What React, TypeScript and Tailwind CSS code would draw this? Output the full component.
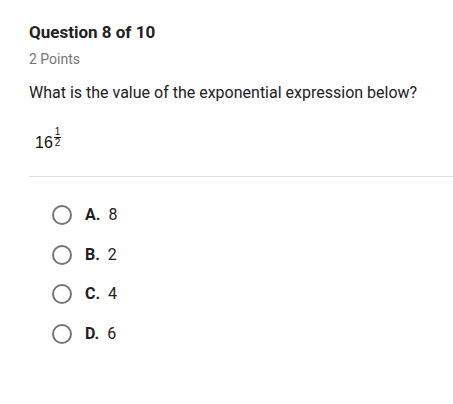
import React from "react";

const options = [
  { letter: "A.", value: "8" },
  { letter: "B.", value: "2" },
  { letter: "C.", value: "4" },
  { letter: "D.", value: "6" },
];

export default function App() {
  return (
    <div className="w-[453px] h-[404px] bg-white font-['Roboto',sans-serif] text-[#212121]">
      <div className="pl-[29px] pt-[22px]">
        <h1 className="text-[17px] font-bold leading-[20px] text-[#212121]">
          Question 8 of 10
        </h1>
        <div className="mt-[8px] text-[14px] leading-[18px] text-[#757575]">
          2 Points
        </div>
        <p className="mt-[15px] text-[16px] leading-[20px] text-[#212121]">
          What is the value of the exponential expression below?
        </p>
        {/* 16^(1/2) */}
        <div className="mt-[24px] flex items-end font-['Liberation_Sans',Arial,sans-serif] text-[#111]">
          <span className="text-[16px] leading-[18px] ml-[6px]">16</span>
          <span className="flex flex-col items-center mb-[5px] ml-[1px] text-[10px] leading-[10px]">
            <span>1</span>
            <span className="border-t border-[#111] px-[1px] leading-[9px]">2</span>
          </span>
        </div>
        <div className="mt-[24px] h-px bg-[#e0e0e0]" />
      </div>
      <div className="pl-[52px] pt-[28px] flex flex-col gap-[19.7px]">
        {options.map((o) => (
          <div key={o.letter} className="flex items-center h-[20px]">
            <span className="w-[20px] h-[20px] rounded-full border-2 border-[#757575]" />
            <span className="ml-[13px] text-[16px] font-bold text-[#212121]">{o.letter}</span>
            <span className="ml-[8px] text-[16px] text-[#212121]">{o.value}</span>
          </div>
        ))}
      </div>
    </div>
  );
}
